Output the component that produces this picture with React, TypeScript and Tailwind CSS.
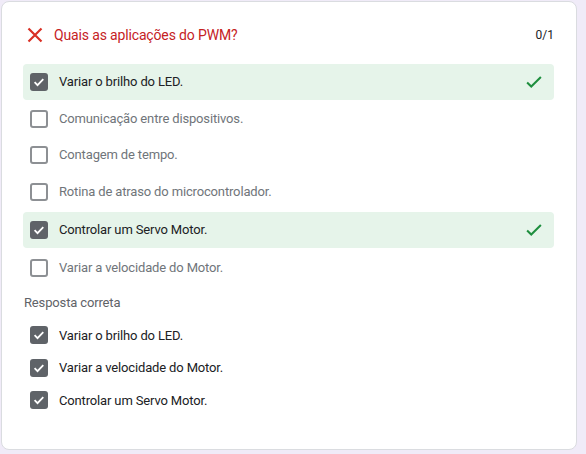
import React from "react";

const Check = ({ className }: { className?: string }) => (
  <svg viewBox="0 0 24 24" className={className} fill="none">
    <path d="M4.5 12.5l4.5 4.5L19.5 6.5" stroke="currentColor" strokeWidth="2.2" />
  </svg>
);

const Box = ({ checked }: { checked: boolean }) =>
  checked ? (
    <div className="w-[18px] h-[18px] rounded-[3px] bg-[#5f6368] flex items-center justify-center shrink-0">
      <svg viewBox="0 0 18 18" className="w-[18px] h-[18px]" fill="none">
        <path d="M4.6 9.2l2.9 2.9 5.8-6" stroke="#fff" strokeWidth="1.8" />
      </svg>
    </div>
  ) : (
    <div className="w-[18px] h-[18px] rounded-[3px] border-2 border-[#8d9094] shrink-0" />
  );

const options = [
  { t: "Variar o brilho do LED.", c: true },
  { t: "Comunicação entre dispositivos.", c: false },
  { t: "Contagem de tempo.", c: false },
  { t: "Rotina de atraso do microcontrolador.", c: false },
  { t: "Controlar um Servo Motor.", c: true },
  { t: "Variar a velocidade do Motor.", c: false },
];

const correct = ["Variar o brilho do LED.", "Variar a velocidade do Motor.", "Controlar um Servo Motor."];

export default function App() {
  return (
    <div className="w-[586px] h-[454px] bg-[#f0ebf8] p-[1px] pr-[9px] pb-[4px]" style={{ fontFamily: "Roboto, 'Noto Sans', sans-serif" }}>
      <div className="h-full bg-white border border-[#dadce0] rounded-[8px] pl-[21px] pr-[22px] pt-[21px]">
        <div className="flex items-center h-[24px]">
          <svg viewBox="0 0 24 24" className="w-[24px] h-[24px]" fill="none">
            <path d="M5.5 5.5l13 13M18.5 5.5l-13 13" stroke="#d93025" strokeWidth="2.2" />
          </svg>
          <div className="ml-[7px] text-[14px] text-[#c5221f] tracking-[-0.15px]">Quais as aplicações do PWM?</div>
          <div className="ml-auto text-[12px] text-[#202124]">0/1</div>
        </div>
        <div className="mt-[17px] flex flex-col">
          {options.map((o, i) => (
            <div
              key={i}
              className={`flex items-center h-[36px] pl-[7px] pr-[9px] rounded-[4px] ${o.c ? "bg-[#e6f4ea]" : ""} ${i === 4 ? "mt-[2px]" : ""} ${i === 5 ? "mt-[2px]" : ""} ${i > 0 && i < 4 ? "mt-[0.5px]" : ""}`}
            >
              <Box checked={o.c} />
              <span className={`ml-[11px] text-[13px] tracking-[-0.15px] ${o.c ? "text-[#202124]" : "text-[#70757a]"}`}>{o.t}</span>
              {o.c && <Check className="ml-auto w-[22px] h-[22px] text-[#1e8e3e]" />}
            </div>
          ))}
        </div>
        <div className="mt-[7px] ml-[1px] text-[13px] text-[#5f6368] tracking-[-0.15px]">Resposta correta</div>
        <div className="mt-[7px] flex flex-col">
          {correct.map((t, i) => (
            <div key={i} className="flex items-center h-[32.5px] pl-[7px]">
              <Box checked />
              <span className="ml-[11px] text-[13px] text-[#202124] tracking-[-0.15px]">{t}</span>
            </div>
          ))}
        </div>
      </div>
    </div>
  );
}
